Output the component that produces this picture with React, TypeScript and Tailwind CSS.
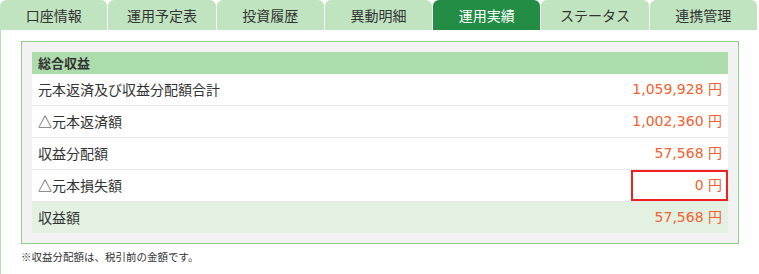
const tabs = ["口座情報", "運用予定表", "投資履歴", "異動明細", "運用実績", "ステータス", "連携管理"];

const rows = [
  { label: "元本返済及び収益分配額合計", value: "1,059,928" },
  { label: "△元本返済額", value: "1,002,360" },
  { label: "収益分配額", value: "57,568" },
  { label: "△元本損失額", value: "0", flagged: true },
];

const numFont = { fontFamily: '"DejaVu Sans", "Noto Sans CJK JP", sans-serif' };

export default function App() {
  return (
    <div
      className="h-[274px] w-[759px] bg-white text-[#333]"
      style={{ fontFamily: '"Noto Sans CJK JP", "Noto Sans", sans-serif' }}
    >
      {/* Tabs */}
      <div className="flex h-[30px] w-[757px] gap-px">
        {tabs.map((tab) => (
          <div
            key={tab}
            className={
              tab === "運用実績"
                ? "flex flex-1 items-center justify-center rounded-t-[6px] bg-[#238c45] text-[14px] text-white"
                : "flex flex-1 items-center justify-center rounded-t-[6px] bg-[#bfe4bf] text-[14px] text-[#333]"
            }
          >
            {tab}
          </div>
        ))}
      </div>

      <div className="h-[244px] border-l border-[#b8e0b8] pl-[20px] pt-[11px]">
        {/* Summary box */}
        <div className="w-[718px] border border-[#8fcf8a] bg-[#f2f2f2] p-[10px]">
          <div className="flex h-[22px] items-center bg-[#acdcac] px-[6px] text-[13px] font-bold">
            総合収益
          </div>
          {rows.map((row) => (
            <div
              key={row.label}
              className="flex h-[32px] items-center justify-between border-b border-[#e6e6e6] bg-white px-[6px] text-[14px]"
            >
              <span>{row.label}</span>
              {row.flagged ? (
                <span
                  className="-mr-[6px] flex h-[31px] w-[97px] items-center justify-end border-2 border-[#ee2222] pr-[4px] text-[14px] text-[#f4602e]"
                  style={numFont}
                >
                  {row.value} 円
                </span>
              ) : (
                <span className="text-[14px] text-[#f4602e]" style={numFont}>
                  {row.value} 円
                </span>
              )}
            </div>
          ))}
          <div className="flex h-[31px] items-center justify-between bg-[#e3f1e3] px-[6px] text-[14px]">
            <span>収益額</span>
            <span className="text-[14px] text-[#f4602e]" style={numFont}>
              57,568 円
            </span>
          </div>
        </div>
        <p className="mt-[5px] text-[10.5px]">※収益分配額は、税引前の金額です。</p>
      </div>
    </div>
  );
}
